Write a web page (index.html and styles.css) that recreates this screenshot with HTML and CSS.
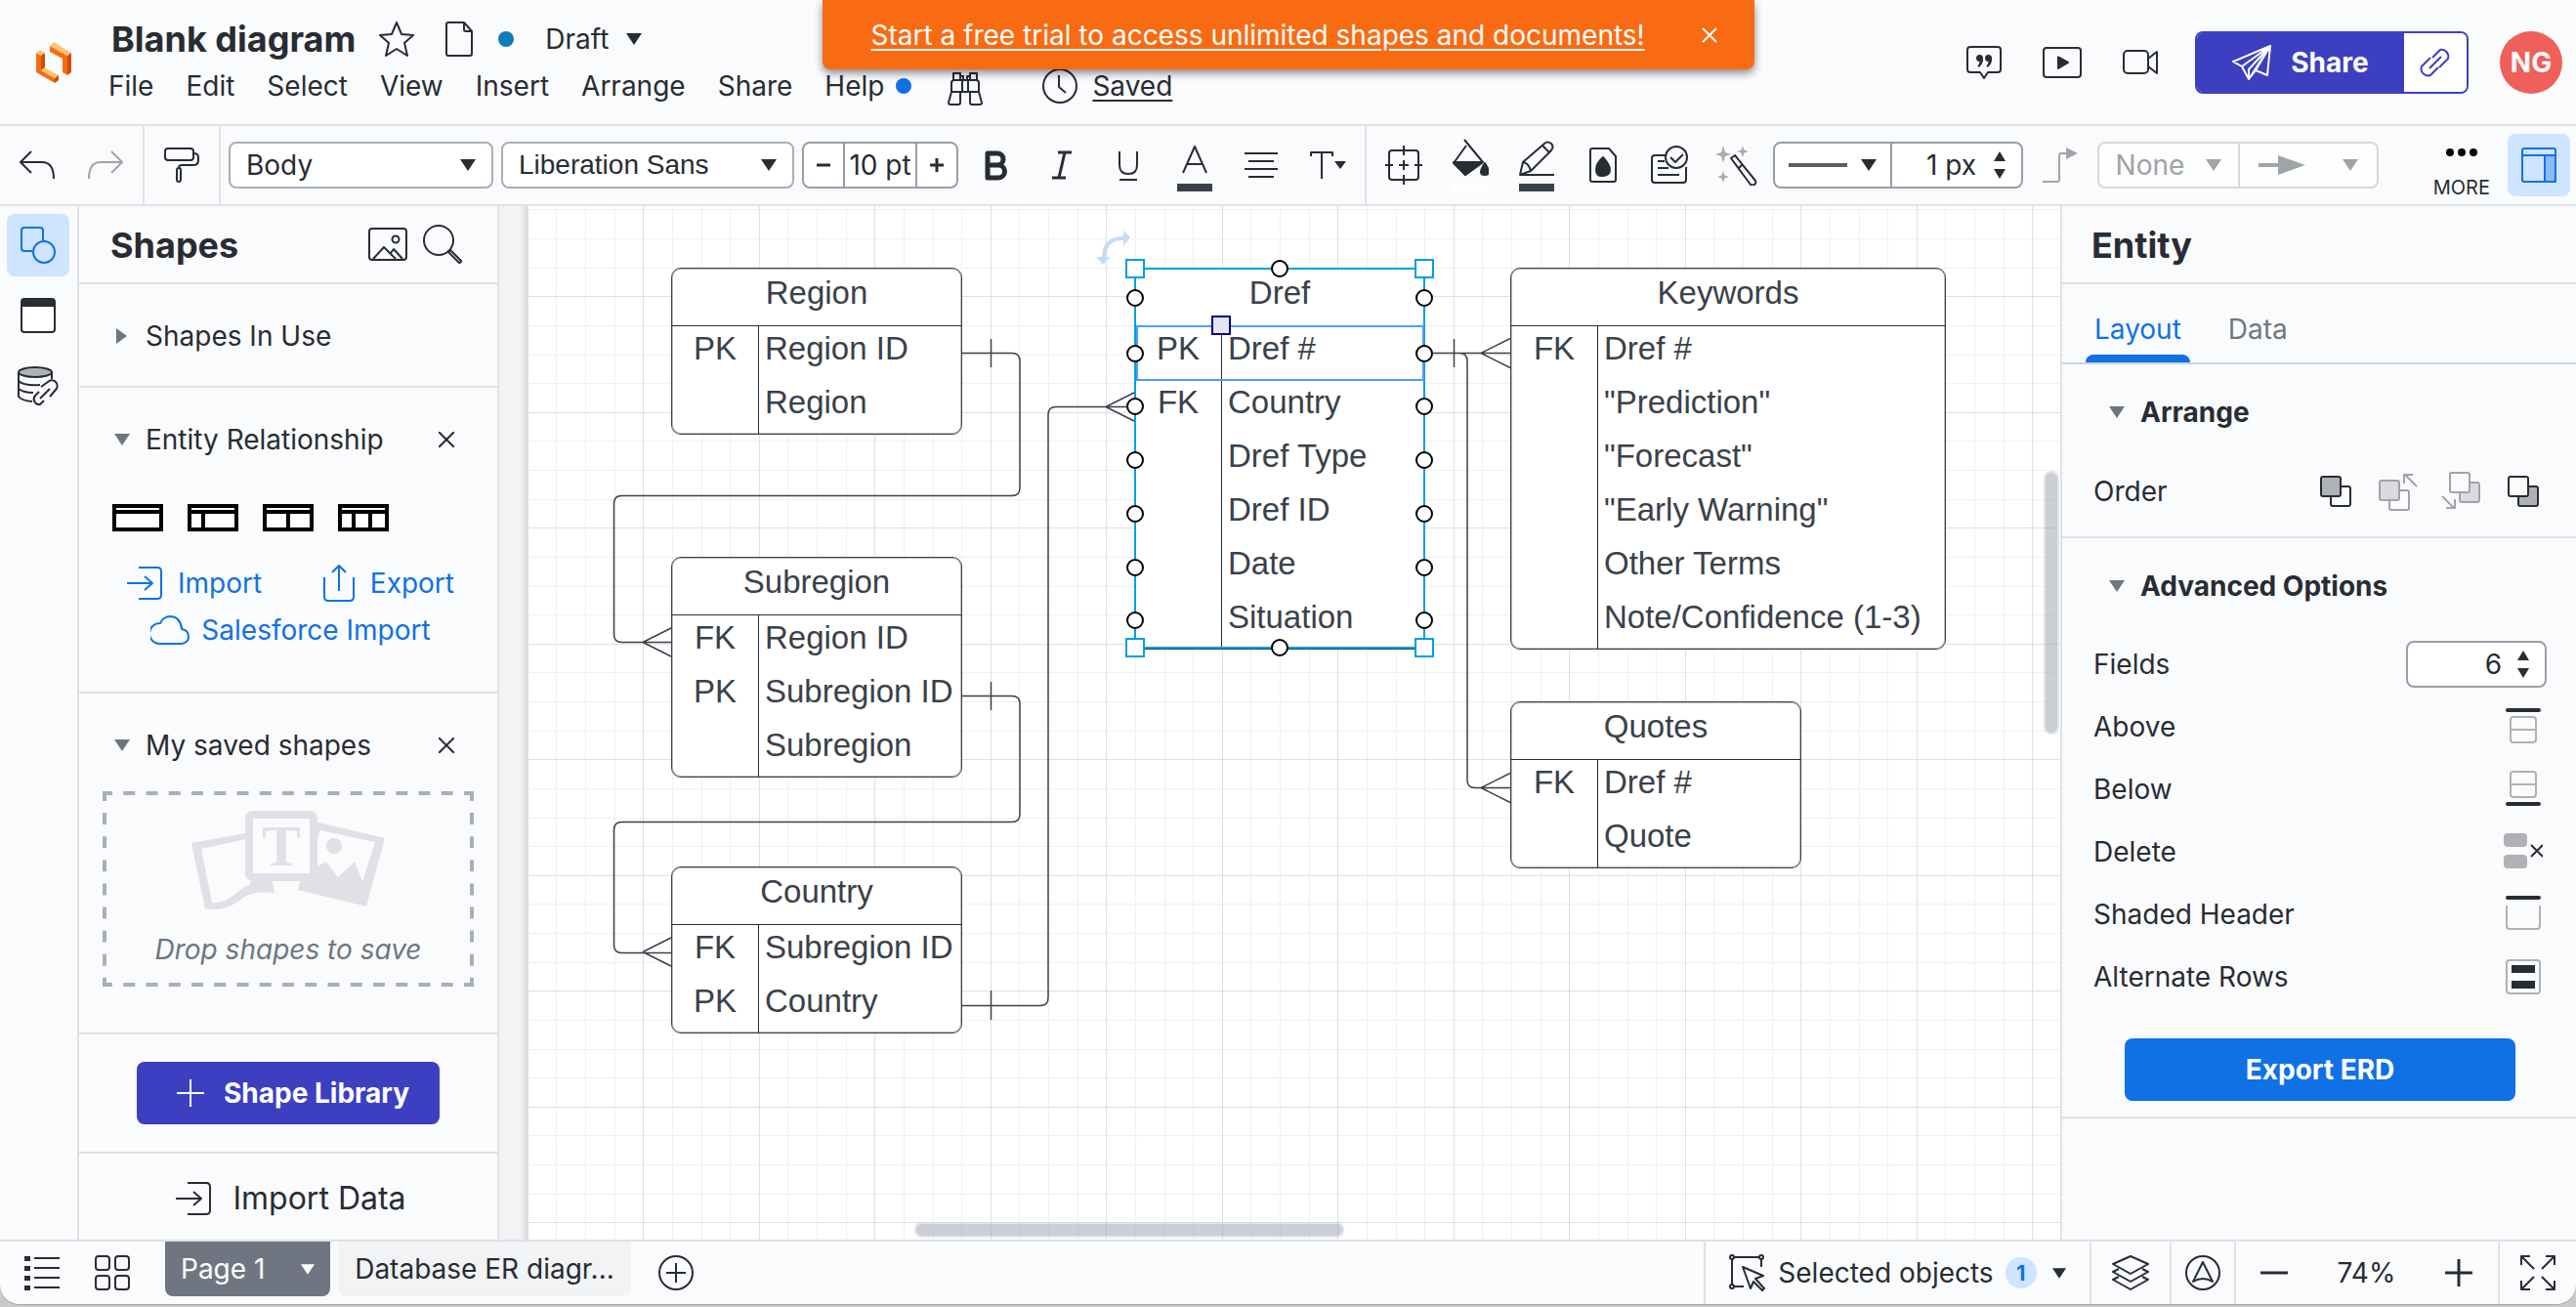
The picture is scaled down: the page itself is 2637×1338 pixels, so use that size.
FILE: index.html
```html
<!DOCTYPE html>
<html lang="en">
<head>
<meta charset="utf-8">
<title>Blank diagram</title>
<link rel="stylesheet" href="styles.css">
</head>
<body>
<div class="app">

<header class="header">
  <a class="logo" href="#" aria-label="Home">
    <svg width="36" height="42" viewBox="37 43 36 42">
      <path fill="#f96b13" d="M37 54l5 3v15l14 8v5L37 74zM51 47l18 10v20l-5-3V60l-13-7z"/>
      <path fill="#ffc572" d="M37 54l4-3 5 3-4 3zM42 72l4-3 14 8-4 3zM51 47l4-4 18 11-4 3z"/>
      <path fill="#c94f05" d="M42 57l4-3v15l-4 3zM56 80l4-3v5l-4 3zM69 57l4-3v20l-4 3z"/>
    </svg>
  </a>
  <div class="head-main">
    <div class="title-row">
      <h1 class="doc-title">Blank diagram</h1>
      <button class="plain" aria-label="Favorite"><svg class="ic" width="36" height="36" viewBox="0 0 36 36"><path d="M18 1l5 12 12 1-9 8 3 13-11-7-11 7 3-13-9-8 12-1z"/></svg></button>
      <svg class="ic doc-icon" width="28" height="36" viewBox="0 0 28 36"><path d="M3 1h16l8 9v23q0 2-2 2H3q-2 0-2-2V3q0-2 2-2zM19 1v7q0 2 2 2h6"/></svg>
      <span class="dot dot-status"></span>
      <button class="plain draft">Draft <svg class="tri" width="16" height="12" viewBox="0 0 16 12"><path d="M0 0h16L8 12z"/></svg></button>
    </div>
    <nav class="menu">
      <button class="plain">File</button><button class="plain">Edit</button><button class="plain">Select</button><button class="plain">View</button><button class="plain">Insert</button><button class="plain">Arrange</button><button class="plain">Share</button><button class="plain help">Help <span class="dot"></span></button>
      <button class="plain find" aria-label="Find"><svg class="ic" width="36" height="40" viewBox="0 0 36 40"><path d="M6 14V7h7v7M23 14V7h7v7M13 14v-4h3v4M20 14v-4h3v4M4 26V17q0-3 3-3h22q3 0 3 3v9M4 26h28M15 14v12M21 14v12M4 26L1 37q0 2 2 2h8q2 0 2-2V26M32 26l3 11q0 2-2 2h-8q-2 0-2-2V26"/></svg></button>
      <svg class="ic clock" width="36" height="36" viewBox="0 0 36 36"><circle cx="18" cy="18" r="17"/><path d="M17 7v12l7 6"/></svg>
      <a class="saved" href="#">Saved</a>
    </nav>
  </div>
  <div class="head-actions">
    <button class="plain" aria-label="Comments"><svg class="ic" width="36" height="36" viewBox="0 0 36 36"><path d="M4 2h28q3 0 3 3v20q0 3-3 3H22l-4 6-4-6H4q-3 0-3-3V5q0-3 3-3z"/><path class="fill nostroke" d="M13.500 10a3.500 3.500 0 1 0 0 7q0 2.500-2 4.500l1 1.500c3.500-2.500 5-6 4.500-9.500a3.500 3.500 0 0 0-3.500-3.500zM22.500 10a3.500 3.500 0 1 0 0 7q0 2.500-2 4.500l1 1.500c3.500-2.500 5-6 4.500-9.500a3.500 3.500 0 0 0-3.500-3.500z"/></svg></button>
    <button class="plain" aria-label="Present"><svg class="ic" width="40" height="32" viewBox="0 0 40 32"><rect x="1" y="1" width="38" height="30" rx="3"/><path class="fill" d="M16 10.500l10 5.500-10 6z"/></svg></button>
    <button class="plain" aria-label="Video"><svg class="ic" width="36" height="26" viewBox="0 0 36 26"><rect x="1" y="1" width="25" height="23" rx="4"/><path d="M26 9l9-7v22l-9-7"/></svg></button>
    <div class="share">
      <button class="share-main"><svg class="ic" width="40" height="36" viewBox="0 0 40 36"><path d="M39 1L1 17l9 5zM39 1L36 31l-12-5zM39 1L10 22l7 13 7-9zM39 1L17 35V25z"/></svg>Share</button>
      <button class="share-link" aria-label="Copy link"><svg class="ic" width="34" height="34" viewBox="0 0 34 34"><path d="M14 12l8-8a7 7 0 0 1 8 9l-9 9M20 22l-8 8a7 7 0 0 1-9-9l9-9M11 23L23 11"/></svg></button>
    </div>
    <button class="avatar">NG</button>
  </div>
</header>

<div class="banner">
  <a href="#">Start a free trial to access unlimited shapes and documents!</a>
  <button class="plain" aria-label="Close"><svg class="ic" width="16" height="16" viewBox="0 0 16 16"><path d="M1 1l14 14M15 1L1 15"/></svg></button>
</div>

<div class="toolbar">
  <div class="tb-group tb-history">
    <button class="plain" aria-label="Undo"><svg class="ic" width="36" height="30" viewBox="0 0 36 30"><path d="M12 1L1 12l11 11M1 12h22q12 0 12 17"/></svg></button>
    <button class="plain" aria-label="Redo" disabled><svg class="ic dim" width="36" height="30" viewBox="0 0 36 30"><path d="M24 1l11 11-11 11M35 12H13Q1 12 1 29"/></svg></button>
  </div>
  <div class="tb-group tb-paint">
    <button class="plain" aria-label="Format painter"><svg class="ic" width="36" height="36" viewBox="0 0 36 36"><rect x="1" y="1" width="29" height="12" rx="3"/><path d="M30 6q5 0 5 4v3q0 5-5 5H18q-3 0-3 3"/><rect x="13" y="21" width="4" height="14" rx="2"/></svg></button>
  </div>
  <div class="tb-group tb-text">
    <div class="drop drop-style"><select aria-label="Text style"><option>Body</option></select><svg class="tri" width="16" height="12" viewBox="0 0 16 12"><path d="M0 0h16L8 12z"/></svg></div>
    <div class="drop drop-font"><select aria-label="Font"><option>Liberation Sans</option></select><svg class="tri" width="16" height="12" viewBox="0 0 16 12"><path d="M0 0h16L8 12z"/></svg></div>
    <div class="size">
      <button aria-label="Smaller"><svg class="ic heavy" width="14" height="14" viewBox="0 0 14 14"><path d="M0 7h14"/></svg></button>
      <input type="text" value="10 pt" aria-label="Font size">
      <button aria-label="Larger"><svg class="ic heavy" width="14" height="14" viewBox="0 0 14 14"><path d="M0 7h14M7 0v14"/></svg></button>
    </div>
    <div class="cells">
      <button class="cell" aria-label="Bold"><svg class="ic boldest" width="28" height="36" viewBox="0 0 28 36"><path d="M6 6h10a6 6 0 0 1 0 12H6zM6 18h11a6.500 6.500 0 0 1 0 13H6z"/></svg></button>
      <button class="cell" aria-label="Italic"><svg class="ic heavy" width="28" height="36" viewBox="0 0 28 36"><path d="M10 5h14M4 31h14M17 5l-6 26"/></svg></button>
      <button class="cell" aria-label="Underline"><svg class="ic" width="28" height="36" viewBox="0 0 28 36"><path d="M5 4v14q0 9 9 9t9-9V4M5 33h18"/></svg></button>
      <button class="cell" aria-label="Text color"><svg class="ic" width="36" height="54" viewBox="0 0 36 54"><path d="M6 35L18 8l12 27M10 26h16"/><path class="swatch" d="M0 46h36v8H0z"/></svg></button>
      <button class="cell" aria-label="Align"><svg class="ic" width="34" height="28" viewBox="0 0 34 28"><path d="M0 2h34M4 10h26M0 18h34M4 26h26"/></svg></button>
      <button class="cell" aria-label="Text options"><svg class="ic" width="38" height="30" viewBox="0 0 38 30"><path d="M2 6V2h22v4M13 2v27"/><path class="fill nostroke" d="M26 11h12l-6 8z"/></svg></button>
    </div>
  </div>
  <div class="tb-group tb-shape">
    <div class="cells">
      <button class="cell" aria-label="Position"><svg class="ic" width="38" height="40" viewBox="0 0 38 40"><rect x="4" y="5" width="30" height="30" rx="3"/><path d="M19 0v10M19 30v10M0 20h8M30 20h8M14 20h10M19 15v10"/></svg></button>
      <button class="cell" aria-label="Fill"><svg class="ic" width="38" height="54" viewBox="0 0 38 54"><path d="M13 1l19 23-18 13L2 25l13-18"/><path class="fill" d="M2 24h30L14 37z"/><path class="fill" d="M34 25q4 6 4 9t-4 3-4-3 4-9z"/><path fill="#fff" stroke="none" d="M1 46h36v8H1z"/></svg></button>
      <button class="cell" aria-label="Line color"><svg class="ic" width="36" height="54" viewBox="0 0 36 54"><path d="M1 37l3-13L26 5q3-3 7 0 3 3 0 7L12 33zM24 7l7 7M4 24q6 1 8 9M1 37h35"/><path class="swatch" d="M0 46h36v8H0z"/></svg></button>
      <button class="cell" aria-label="Opacity"><svg class="ic" width="28" height="36" viewBox="0 0 28 36"><path d="M3 1h17l7 8v24q0 2-2 2H3q-2 0-2-2V3q0-2 2-2z"/><path class="fill" d="M14 10q7 8 7 13t-7 6-7-6 7-13z"/></svg></button>
      <button class="cell" aria-label="Review"><svg class="ic" width="38" height="40" viewBox="0 0 38 40"><path d="M15 10H4q-3 0-3 3v22q0 3 3 3h29q3 0 3-3V22M7 16h7M7 23h11M7 30h22"/><circle cx="26" cy="12" r="11"/><path d="M20 12l5 5 8-8"/></svg></button>
      <button class="cell" aria-label="Magic wand"><svg class="ic" width="44" height="42" viewBox="0 0 44 42"><path d="M17 14l4-3 21 26q1 3-1 4t-4 0zM25 24l4-4"/><path fill="#a9abaf" stroke="none" d="M9 1l2 7 6 2-6 2-2 7-2-7-6-2 6-2zM29 1l1.500 4.500L35 7l-4.500 1.500L29 13l-1.500-4.500L23 7l4.500-1.500zM9 27l1.500 4.500L15 33l-4.500 1.500L9 39l-1.500-4.500L3 33l4.500-1.500z"/></svg></button>
    </div>
    <div class="size stroke-box">
      <button class="line-style" aria-label="Line style"><svg width="60" height="4"><rect width="60" height="4" fill="#5c5e61"/></svg><svg class="tri" width="16" height="12" viewBox="0 0 16 12"><path d="M0 0h16L8 12z"/></svg></button>
      <input class="px" type="text" value="1 px" aria-label="Line width">
      <svg class="tri spin" width="12" height="28" viewBox="0 0 12 28"><path d="M0 10L6 0l6 10zM0 18h12L6 28z"/></svg>
    </div>
    <button class="cell" aria-label="Connector" disabled><svg class="ic dim" width="36" height="36" viewBox="0 0 36 36"><path d="M0 35h15q2 0 2-2V8q0-2 2-2h6"/><path fill="#a0a3a8" stroke="none" d="M24 0l12 6-12 6z"/></svg></button>
    <div class="size ends">
      <button class="none" disabled>None<svg class="tri" width="16" height="12" viewBox="0 0 16 12"><path d="M0 0h16L8 12z"/></svg></button>
      <button class="end" aria-label="Arrow end" disabled><svg class="tri" width="48" height="20" viewBox="0 0 48 20"><path d="M0 8h20V0l28 10-28 10v-8H0z"/></svg><svg class="tri" width="16" height="12" viewBox="0 0 16 12"><path d="M0 0h16L8 12z"/></svg></button>
    </div>
  </div>
  <div class="tb-end">
    <button class="more"><svg width="32" height="8" viewBox="0 0 32 8"><circle cx="4" cy="4" r="4"/><circle cx="16" cy="4" r="4"/><circle cx="28" cy="4" r="4"/></svg>MORE</button>
    <button class="toggle on" aria-label="Toggle panel"><svg class="ic" width="36" height="36" viewBox="0 0 36 36"><path fill="#8bbcf5" d="M24 8h11v27H24z"/><rect x="1" y="1" width="34" height="34" rx="2"/><path d="M1 8h34M24 8v27"/></svg></button>
  </div>
</div>

<div class="work">
  <aside class="rail">
    <button class="toggle on" aria-label="Shapes"><svg class="ic" width="36" height="38" viewBox="0 0 36 38"><path d="M12 25H4q-3 0-3-3V4q0-3 3-3h16q3 0 3 3v10"/><circle cx="24" cy="26" r="11"/></svg></button>
    <button class="toggle" aria-label="Containers"><svg class="ic" width="36" height="38" viewBox="0 0 36 38"><rect x="1" y="2" width="34" height="34" rx="3" fill="#fff"/><path class="fill" d="M2 3h32v6H2z"/></svg></button>
    <button class="toggle" aria-label="Data"><svg class="ic" width="42" height="42" viewBox="0 0 42 42"><path fill="#b0b2b6" d="M1 7a17 5 0 0 1 34 0 17 5 0 0 1-34 0z"/><path d="M1 7v25q3 4 14 5M35 7v7M1 16q5 5 22 4M1 24q5 4 15 4"/><path d="M24 22l7-5a5.500 5.500 0 0 1 8 8l-6 7M27 36l-4 4a5.500 5.500 0 0 1-5-9l4-4M23 34l10-10"/></svg></button>
  </aside>

  <aside class="shapes">
    <div class="panel-head shapes-head">
      <h2>Shapes</h2>
      <button class="plain" aria-label="Images"><svg class="ic" width="40" height="34" viewBox="0 0 40 34"><rect x="1" y="1" width="38" height="32" rx="3"/><circle cx="28" cy="12" r="3.500"/><path d="M5 32l11-12 9 9M23 26l3-4 9 10M22 26l6 6"/></svg></button>
      <button class="plain" aria-label="Search"><svg class="ic" width="40" height="40" viewBox="0 0 40 40"><circle cx="16" cy="16" r="15"/><path d="M26 28l2-2 11 11q0 2-2 2z"/></svg></button>
    </div>
    <section class="sec">
      <button class="sec-head"><svg class="tri grey" width="16" height="16" viewBox="0 0 16 16"><path d="M2 0l11 8-11 8z"/></svg><span>Shapes In Use</span></button>
    </section>
    <section class="sec sec-er">
      <div class="sec-head"><svg class="tri grey" width="16" height="12" viewBox="0 0 16 12"><path d="M0 0h16L8 12z"/></svg><span>Entity Relationship</span><button class="plain" aria-label="Close"><svg class="ic" width="16" height="16" viewBox="0 0 16 16"><path d="M0 0l16 16M16 0L0 16"/></svg></button></div>
      <div class="er-shapes">
        <svg width="52" height="28" viewBox="0 0 52 28"><rect x="2" y="2" width="48" height="24"/><path d="M2 8h48"/></svg>
        <svg width="52" height="28" viewBox="0 0 52 28"><rect x="2" y="2" width="48" height="24"/><path d="M2 8h48M16 8v18"/></svg>
        <svg width="52" height="28" viewBox="0 0 52 28"><rect x="2" y="2" width="48" height="24"/><path d="M2 8h48M26 8v18"/></svg>
        <svg width="52" height="28" viewBox="0 0 52 28"><rect x="2" y="2" width="48" height="24"/><path d="M2 8h48M16 8v18M33 8v18"/></svg>
      </div>
      <div class="er-links">
        <a href="#"><svg class="ic" width="36" height="34" viewBox="0 0 36 34"><path d="M12 1h19q4 0 4 4v24q0 4-4 4H12M0 17h25M18 10l8 7-8 7"/></svg>Import</a>
        <a href="#"><svg class="ic" width="32" height="38" viewBox="0 0 32 38"><path d="M1 13v20q0 4 4 4h22q4 0 4-4V13M16 27V2M9 8l7-7 7 7"/></svg>Export</a>
      </div>
      <div class="er-links er-sales">
        <a href="#"><svg class="ic" width="40" height="30" viewBox="0 0 40 30"><path d="M9 29a10.500 10.500 0 0 1 1-21q3-7 11-7 10 1 11 13 7 1 7 8 0 6-7 7z"/></svg>Salesforce Import</a>
      </div>
    </section>
    <section class="sec sec-saved">
      <div class="sec-head"><svg class="tri grey" width="16" height="12" viewBox="0 0 16 12"><path d="M0 0h16L8 12z"/></svg><span>My saved shapes</span><button class="plain" aria-label="Close"><svg class="ic" width="16" height="16" viewBox="0 0 16 16"><path d="M0 0l16 16M16 0L0 16"/></svg></button></div>
      <div class="dropzone">
        <svg class="dashes" width="100%" height="100%" viewBox="0 0 380 200" preserveAspectRatio="none"><g stroke="#a8afba" stroke-width="4" fill="none"><path stroke-dasharray="12 11.250" stroke-dashoffset="2" d="M0 2h380M0 198h380"/><path stroke-dasharray="12 12.100" stroke-dashoffset="2" d="M2 0v200M378 0v200"/></g></svg>
        <svg class="art" width="198" height="102" viewBox="197 829 198 102">
          <path fill="#e0e1e5" fill-rule="evenodd" d="M197 862l60-11v50l22-2 3 14q-24-3-36 8-16 12-35 8zM207 868l11 55q12 1 24-9 9-8 15-9V857z"/>
          <path fill="#e0e1e5" fill-rule="evenodd" d="M323 840l72 17-19 70-70-17zM328 849l-8 40 15-8 12 16 17-16 8 20 13-40z"/>
          <circle cx="343" cy="865" r="8" fill="#e0e1e5"/>
          <rect x="256" y="833" width="66" height="64" rx="4" fill="#fafbfd" stroke="#e0e1e5" stroke-width="8"/>
          <text x="289" y="885" text-anchor="middle" class="art-t">T</text>
        </svg>
        <em>Drop shapes to save</em>
      </div>
    </section>
    <section class="sec sec-lib">
      <button class="primary"><svg class="ic" width="28" height="28" viewBox="0 0 28 28"><path d="M0 14h28M14 0v28"/></svg>Shape Library</button>
    </section>
    <button class="import-data"><svg class="ic" width="36" height="34" viewBox="0 0 36 34"><path d="M12 1h19q4 0 4 4v24q0 4-4 4H12M0 17h25M18 10l8 7-8 7"/></svg>Import Data</button>
  </aside>

  <div class="gutter"></div>

  <main class="canvas">
    <svg class="layer" width="100%" height="100%">
      <defs>
        <pattern id="grid" x="118" y="92" width="237" height="237" patternUnits="userSpaceOnUse">
          <path fill="#f0f0f1" d="M30 0h1v237h-1zM60 0h1v237h-1zM89 0h1v237h-1zM148 0h1v237h-1zM178 0h1v237h-1zM208 0h1v237h-1zM0 30h237v1H0zM0 60h237v1H0zM0 89h237v1H0zM0 148h237v1H0zM0 178h237v1H0zM0 208h237v1H0z"/>
          <path fill="#dfdfe0" d="M0 0h1v237H0zM119 0h1v237h-1zM0 0h237v1H0zM0 119h237v1H0z"/>
        </pattern>
      </defs>
      <rect width="100%" height="100%" fill="url(#grid)"/>
      <g class="wires">
        <path d="M445 150.500h51q8 0 8 8v130q0 8-8 8H96.500q-8 0-8 8v134q0 8 8 8H148M118 446.500l30-15M118 446.500l30 15M474.500 136v29"/>
        <path d="M445 501.500h51q8 0 8 8v113q0 8-8 8H96.500q-8 0-8 8v118q0 8 8 8H148M118 763.500l30-15M118 763.500l30 15M474.500 487v29"/>
        <path d="M445 818.500h80q8 0 8-8v-597q0-8 8-8h81M592 205.500l30-15M592 205.500l30 15M474.500 803v30"/>
        <path d="M918 150.500h88M976 150.500l30-15M976 150.500l30 15M948.500 136v29M950 150.500h4q8 0 8 8v429q0 8 8 8h36M976 595.500l30-15M976 595.500l30 15"/>
      </g>
    </svg>

    <table class="entity e-region"><colgroup><col class="key"><col></colgroup><thead><tr><th colspan="2">Region</th></tr></thead><tbody><tr><td>PK</td><td>Region ID</td></tr><tr><td></td><td>Region</td></tr></tbody></table>
    <table class="entity e-subregion"><colgroup><col class="key"><col></colgroup><thead><tr><th colspan="2">Subregion</th></tr></thead><tbody><tr><td>FK</td><td>Region ID</td></tr><tr><td>PK</td><td>Subregion ID</td></tr><tr><td></td><td>Subregion</td></tr></tbody></table>
    <table class="entity e-country"><colgroup><col class="key"><col></colgroup><thead><tr><th colspan="2">Country</th></tr></thead><tbody><tr><td>FK</td><td>Subregion ID</td></tr><tr><td>PK</td><td>Country</td></tr></tbody></table>
    <table class="entity e-dref"><colgroup><col class="key"><col></colgroup><thead><tr><th colspan="2">Dref</th></tr></thead><tbody><tr><td>PK</td><td>Dref #</td></tr><tr><td>FK</td><td>Country</td></tr><tr><td></td><td>Dref Type</td></tr><tr><td></td><td>Dref ID</td></tr><tr><td></td><td>Date</td></tr><tr><td></td><td>Situation</td></tr></tbody></table>
    <table class="entity e-keywords"><colgroup><col class="key"><col></colgroup><thead><tr><th colspan="2">Keywords</th></tr></thead><tbody><tr><td>FK</td><td>Dref #</td></tr><tr><td></td><td>"Prediction"</td></tr><tr><td></td><td>"Forecast"</td></tr><tr><td></td><td>"Early Warning"</td></tr><tr><td></td><td>Other Terms</td></tr><tr><td></td><td>Note/Confidence (1-3)</td></tr></tbody></table>
    <table class="entity e-quotes"><colgroup><col class="key"><col></colgroup><thead><tr><th colspan="2">Quotes</th></tr></thead><tbody><tr><td>FK</td><td>Dref #</td></tr><tr><td></td><td>Quote</td></tr></tbody></table>

    <svg class="layer" width="100%" height="100%">
      <rect x="622" y="64" width="296" height="388" fill="none" stroke="#019fe2" stroke-width="2"/>
      <rect x="624" y="123" width="293" height="55" fill="none" stroke="#4f9bff" stroke-width="2"/>
      <path fill="#c5dcf7" d="M582 52h15l-8 8zM610 25l7 7-7 9z"/>
      <path fill="none" stroke="#c5dcf7" stroke-width="4" d="M590 53q0-19 18-20h3"/>
      <g fill="#fff" stroke="#019fe2" stroke-width="2"><rect x="613" y="55" width="18" height="18"/><rect x="909" y="55" width="18" height="18"/><rect x="613" y="443" width="18" height="18"/><rect x="909" y="443" width="18" height="18"/></g>
      <g fill="#fff" stroke="#000" stroke-width="2">
        <circle cx="770" cy="64" r="8"/><circle cx="770" cy="452" r="8"/>
        <circle cx="622" cy="94" r="8"/><circle cx="622" cy="151" r="8"/><circle cx="622" cy="205" r="8"/><circle cx="622" cy="260" r="8"/><circle cx="622" cy="315" r="8"/><circle cx="622" cy="370" r="8"/><circle cx="622" cy="424" r="8"/>
        <circle cx="918" cy="94" r="8"/><circle cx="918" cy="151" r="8"/><circle cx="918" cy="205" r="8"/><circle cx="918" cy="260" r="8"/><circle cx="918" cy="315" r="8"/><circle cx="918" cy="370" r="8"/><circle cx="918" cy="424" r="8"/>
      </g>
      <rect x="701" y="113" width="18" height="18" fill="#e6e5f3" stroke="#00008b" stroke-width="2"/>
    </svg>
    <div class="thumb thumb-v"></div>
    <div class="thumb thumb-h"></div>
  </main>

  <aside class="props">
    <div class="panel-head"><h2>Entity</h2></div>
    <div class="tabs"><button class="tab active">Layout</button><button class="tab">Data</button></div>
    <section class="prop-sec arrange">
      <h3><svg class="tri grey" width="16" height="12" viewBox="0 0 16 12"><path d="M0 0h16L8 12z"/></svg>Arrange</h3>
      <div class="prop order"><span>Order</span>
        <button class="plain" aria-label="Bring to front"><svg class="ic" width="40" height="40" viewBox="0 0 40 40"><rect x="15" y="15" width="20" height="20" rx="2"/><rect x="5" y="5" width="20" height="20" rx="2" fill="#b0b1b5"/></svg></button>
        <button class="plain" aria-label="Bring forward" disabled><svg class="ic dim" width="40" height="40" viewBox="0 0 40 40"><rect x="11" y="19" width="20" height="20" rx="2"/><rect x="1" y="9" width="20" height="20" rx="2" fill="#dadbdf"/><path d="M39 15L27 3M26 12V3h9"/></svg></button>
        <button class="plain" aria-label="Send backward" disabled><svg class="ic dim" width="40" height="40" viewBox="0 0 40 40"><rect x="19" y="11" width="20" height="20" rx="2" fill="#dadbdf"/><rect x="9" y="1" width="20" height="20" rx="2" fill="#fafbfd"/><path d="M1 25l12 12M14 28v9H5"/></svg></button>
        <button class="plain" aria-label="Send to back"><svg class="ic" width="40" height="40" viewBox="0 0 40 40"><rect x="15" y="15" width="20" height="20" rx="2" fill="#b0b1b5"/><rect x="5" y="5" width="20" height="20" rx="2" fill="#fafbfd"/></svg></button>
      </div>
    </section>
    <section class="prop-sec adv">
      <h3><svg class="tri grey" width="16" height="12" viewBox="0 0 16 12"><path d="M0 0h16L8 12z"/></svg>Advanced Options</h3>
      <div class="prop fields"><label for="fields">Fields</label><div class="num"><input id="fields" type="text" value="6"><svg class="tri" width="12" height="28" viewBox="0 0 12 28"><path d="M0 10L6 0l6 10zM0 18h12L6 28z"/></svg></div></div>
      <div class="prop"><span>Above</span><button class="plain" aria-label="Add above"><svg class="ic" width="40" height="40" viewBox="0 0 40 40"><path class="heavy" d="M4 3h32"/><g class="pale"><rect x="7" y="10" width="26" height="26" rx="3"/><path d="M7 23h26"/></g></svg></button></div>
      <div class="prop"><span>Below</span><button class="plain" aria-label="Add below"><svg class="ic" width="40" height="40" viewBox="0 0 40 40"><g class="pale"><rect x="7" y="2" width="26" height="26" rx="3"/><path d="M7 15h26"/></g><path class="heavy" d="M4 35h32"/></svg></button></div>
      <div class="prop"><span>Delete</span><button class="plain" aria-label="Delete field"><svg class="ic" width="40" height="40" viewBox="0 0 40 40"><g fill="#b0b1b5" stroke="none"><rect y="1" width="24" height="14" rx="4"/><rect y="23" width="24" height="14" rx="4"/></g><path d="M28 13l12 12M40 13L28 25"/></svg></button></div>
      <div class="prop"><span>Shaded Header</span><button class="plain" aria-label="Shaded header"><svg class="ic" width="40" height="40" viewBox="0 0 40 40"><path class="heavy" d="M4 3h32"/><path class="pale" d="M3 11v21q0 3 3 3h28q3 0 3-3V11"/></svg></button></div>
      <div class="prop"><span>Alternate Rows</span><button class="plain" aria-label="Alternate rows"><svg class="ic" width="40" height="40" viewBox="0 0 40 40"><rect class="pale" x="3" y="3" width="34" height="34" rx="3"/><path class="fill nostroke" d="M8 8h24v8H8zM8 24h24v8H8z"/></svg></button></div>
      <button class="export">Export ERD</button>
    </section>
  </aside>
</div>

<footer class="footer">
  <button class="plain" aria-label="List"><svg class="ic" width="36" height="36" viewBox="0 0 36 36"><path d="M10 3h26M10 13h26M10 23h26M10 33h26"/><path class="fill nostroke" d="M0 1h6v5H0zM0 11h6v5H0zM0 21h6v5H0zM0 31h6v5H0z"/></svg></button>
  <button class="plain" aria-label="Grid"><svg class="ic" width="36" height="36" viewBox="0 0 36 36"><rect x="1" y="1" width="14" height="14" rx="3"/><rect x="21" y="1" width="14" height="14" rx="3"/><rect x="1" y="21" width="14" height="14" rx="3"/><rect x="21" y="21" width="14" height="14" rx="3"/></svg></button>
  <button class="page current">Page 1<svg class="tri" width="14" height="11" viewBox="0 0 16 12"><path d="M0 0h16L8 12z"/></svg></button>
  <button class="page">Database ER diagr...</button>
  <button class="plain add" aria-label="Add page"><svg class="ic" width="36" height="36" viewBox="0 0 36 36"><circle cx="18" cy="18" r="17"/><path d="M8 18h20M18 8v20"/></svg></button>
  <div class="foot-end">
    <button class="fcell selected"><svg class="ic" width="38" height="38" viewBox="0 0 38 38"><path d="M5 3h26M3 5v26M33 5v8M5 33h10"/><circle cx="3" cy="3" r="2"/><circle cx="33" cy="3" r="2"/><circle cx="3" cy="33" r="2"/><path d="M14 13l21 9-8 3 9 10-2 2-9-9-3 7z"/></svg><span>Selected objects</span><span class="badge">1</span><svg class="tri" width="14" height="11" viewBox="0 0 16 12"><path d="M0 0h16L8 12z"/></svg></button>
    <button class="fcell layers" aria-label="Layers"><svg class="ic" width="38" height="36" viewBox="0 0 38 36"><path d="M19 1l18 8-18 10L1 9zM7 14l-6 3 18 10 18-10-6-3M7 22l-6 3 18 10 18-10-6-3"/></svg></button>
    <button class="fcell compass" aria-label="Navigate"><svg class="ic" width="36" height="36" viewBox="0 0 36 36"><circle cx="18" cy="18" r="17"/><path d="M18 7l10 20q-10-6-20 0z"/></svg></button>
    <div class="fcell zoom">
      <button class="plain" aria-label="Zoom out"><svg class="ic thick" width="28" height="28" viewBox="0 0 28 28"><path d="M0 14h28"/></svg></button>
      <span>74%</span>
      <button class="plain" aria-label="Zoom in"><svg class="ic thick" width="28" height="28" viewBox="0 0 28 28"><path d="M0 14h28M14 0v28"/></svg></button>
    </div>
    <button class="fcell full" aria-label="Full screen"><svg class="ic" width="36" height="36" viewBox="0 0 36 36"><path d="M1 10V1h9M1 1l13 13M26 1h9v9M35 1L22 14M1 26v9h9M1 35l13-13M35 26v9h-9M35 35L22 22"/></svg></button>
  </div>
</footer>
</div>
</body>
</html>
```
FILE: styles.css
```css
* { box-sizing: border-box; }

body {
  margin: 0;
  height: 100vh;
  display: flex;
  flex-direction: column;
  padding-bottom: 3px;
  background: #cacaca;
  color: #282c33;
  font: 28px/32px Inter, "Liberation Sans", sans-serif;
}

button, input, select { font: inherit; color: inherit; margin: 0; }
button { background: none; border: 0; padding: 0; display: flex; align-items: center; justify-content: center; }
h1, h2, h3 { margin: 0; font-weight: 700; }
svg { flex: none; display: block; }
a { color: inherit; }

.app {
  flex: 1;
  min-height: 0;
  display: flex;
  flex-direction: column;
  position: relative;
  background: #fafbfd;
  border-radius: 0 0 20px 20px;
  box-shadow: 0 1px 0 #a6a6a6;
  overflow: hidden;
}

/* Icons */
.ic { fill: none; stroke: currentColor; stroke-width: 2; stroke-linejoin: round; stroke-linecap: butt; }
.ic .fill { fill: currentColor; }
.ic .nostroke { stroke: none; }
.ic .heavy { stroke-width: 4; stroke-linecap: round; }
.ic .pale { stroke: #b0b1b5; }
.ic .swatch { fill: #3a414a; stroke: none; }
.heavy, .thick { stroke-width: 3; }
.boldest { stroke-width: 5; }
.dim { color: #a0a3a8; }
.tri { fill: currentColor; }
.grey { color: #6f7681; }

/* Header */
.header { flex: none; height: 129px; display: flex; border-bottom: 2px solid #dfe3e8; }
.logo { width: 112px; padding: 43px 0 0 37px; }
.head-main { padding-top: 16px; }
.title-row, .menu { display: flex; align-items: center; height: 48px; }
.doc-title { font-size: 36px; line-height: 48px; margin: 0 24px 0 2px; }
.doc-icon { margin: 0 26px 0 32px; }
.dot { width: 16px; height: 16px; border-radius: 50%; background: #1071e5; }
.dot-status { background: #0c7cba; margin-right: 32px; }
.draft { gap: 18px; }
.menu { gap: 33px; margin-left: -1px; }
.help { gap: 12px; }
.find { margin-left: 4px; }
.clock { margin-left: 28px; }
.saved { margin-left: -18px; text-underline-offset: 4px; }
.head-actions { margin-left: auto; display: flex; align-items: center; padding-right: 14px; }
.head-actions .plain { margin-right: 42px; }
.head-actions .plain:nth-child(3) { margin-right: 38px; }
.share { display: flex; width: 280px; height: 64px; margin-right: 32px; border: 2px solid #3d3fc1; border-radius: 8px; overflow: hidden; }
.share-main { flex: 1; gap: 20px; background: #3d3fc1; color: #fff; font-weight: 700; }
.share-link { width: 64px; background: #fff; color: #3d3fc1; }
.avatar { width: 64px; height: 64px; border-radius: 50%; background: #ee6059; color: #fff; font-weight: 700; }

.banner {
  position: absolute;
  top: 0;
  left: 50%;
  transform: translateX(-50%);
  width: 954px;
  height: 71px;
  padding: 0 38px 0 50px;
  display: flex;
  align-items: center;
  justify-content: space-between;
  background: #f96b13;
  color: #fff;
  border-radius: 0 0 8px 8px;
  box-shadow: 0 4px 8px rgba(0, 0, 0, .45);
  white-space: nowrap;
}
.banner a { text-underline-offset: 4px; }

/* Toolbar */
.toolbar { flex: none; height: 82px; display: flex; border-bottom: 2px solid #dfe3e8; }
.tb-group { display: flex; align-items: center; }
.tb-history, .tb-paint, .tb-text { border-right: 2px solid #dfe3e8; }
.tb-history { padding: 0 20px; gap: 34px; }
.tb-paint { padding: 0 20px; }
.tb-text { padding: 0 4px 0 8px; gap: 8px; }
.cells { display: flex; height: 100%; }
.tb-text .cells { margin-left: -4px; }
.cell { width: 68px; height: 80px; }
.tb-shape { padding-left: 4px; gap: 4px; }
.drop { display: grid; align-items: center; height: 48px; }
.drop select, .drop .tri { grid-area: 1 / 1; }
.drop select { appearance: none; width: 100%; height: 48px; padding: 0 16px; background: #fff; border: 2px solid #a8afba; border-radius: 8px; }
.drop .tri { justify-self: end; margin-right: 18px; pointer-events: none; }
.drop-style { width: 271px; }
.drop-font { width: 300px; }
.drop-font select { font-family: "Liberation Sans", sans-serif; }
.size { display: flex; width: 160px; height: 48px; background: #fff; border: 2px solid #979ea8; border-radius: 8px; overflow: hidden; }
.size button { width: 40px; }
.size input { flex: 1; min-width: 0; padding: 0; border: 0; background: none; text-align: center; }
.size > input { border: solid #979ea8; border-width: 0 2px; }
.stroke-box { width: 256px; align-items: center; }
.size .line-style { width: 118px; height: 44px; gap: 14px; }
.stroke-box > input { align-self: stretch; border-right: 0; text-align: right; padding-right: 18px; }
.spin { margin-right: 16px; }
.ends { width: 288px; border-color: #d6d8dc; color: #a0a3a8; background: #fdfefe; }
.size .none { width: 142px; gap: 22px; }
.size .end { flex: 1; gap: 38px; border-left: 2px solid #d6d8dc; }
.tb-end { margin-left: auto; display: flex; align-items: center; gap: 18px; padding-right: 6px; }
.more { flex-direction: column; gap: 20px; font-size: 20px; line-height: 24px; padding-top: 18px; }
.toggle { width: 64px; height: 64px; border-radius: 8px; }
.on { background: #cfe4ff; color: #1071e5; }

/* Work area */
.work { flex: 1; min-height: 0; display: flex; }
.rail { flex: none; width: 81px; padding: 8px 8px 0 7px; border-right: 2px solid #dfe1e6; display: flex; flex-direction: column; gap: 8px; }
.shapes { flex: none; width: 430px; border-right: 2px solid #dfe1e6; display: flex; flex-direction: column; }
.panel-head { flex: none; height: 80px; display: flex; align-items: center; padding: 0 32px; border-bottom: 2px solid #dfe1e6; }
.panel-head h2 { font-size: 36px; line-height: 48px; flex: 1; padding-top: 2px; }
.shapes-head { gap: 16px; padding: 0 36px 0 32px; }
.sec { flex: none; border-bottom: 2px solid #dfe1e6; }
.sec-head { width: 100%; height: 104px; padding: 2px 44px 0 36px; display: flex; align-items: center; gap: 16px; justify-content: flex-start; }
.sec-head span { flex: 1; text-align: left; }
.sec-er { padding-bottom: 39px; }
.er-shapes { display: flex; gap: 25px; padding: 15px 34px 29px; }
.er-shapes svg { fill: #fff; stroke: #000; stroke-width: 4; }
.er-links { display: flex; height: 48px; justify-content: space-between; padding: 0 44px 0 49px; color: #1071e5; }
.er-links a { display: flex; align-items: center; gap: 16px; text-decoration: none; }
.er-sales { justify-content: center; }
.er-sales a { gap: 12px; }
.sec-saved { flex: 1; min-height: 300px; }
.dropzone { height: 200px; margin: -4px 24px 0; display: flex; flex-direction: column; align-items: center; gap: 24px; padding-top: 20px; position: relative; color: #6f7681; }
.dashes { position: absolute; inset: 0; }
.art-t { font: 700 60px "Liberation Serif", serif; fill: #e0e1e5; }
.sec-lib { height: 122px; display: flex; align-items: center; justify-content: center; }
.primary { width: 310px; height: 64px; gap: 20px; padding-left: 10px; border-radius: 8px; background: #3d3fc1; color: #fff; font-weight: 700; }
.import-data { flex: none; height: 88px; width: 100%; gap: 22px; padding: 4px 0 0 6px; font-size: 32px; }
.gutter { flex: none; width: 29px; background: linear-gradient(to right, #f2f3f5 22px, #d8d9dc); }

/* Canvas */
.canvas { flex: 1; min-width: 0; position: relative; overflow: hidden; background: #fff; }
.layer { position: absolute; inset: 0; }
.wires { fill: none; stroke: #3a414a; stroke-width: 1.5px; }
.entity { position: absolute; width: 298px; table-layout: fixed; border-spacing: 0; border: 1px solid #3a414a; border-radius: 10px; box-shadow: inset 0 0 0 1px #b9bcc0; background: #fff; color: #3a414a; font: 33px/38px "Liberation Sans", sans-serif; }
.entity .key { width: 89px; }
.entity th { height: 59px; padding: 0 0 8px; font-weight: 400; border-bottom: 1px solid #282c33; }
.entity td { height: 55px; padding: 0 0 10px 6px; white-space: nowrap; }
.entity td:first-child { padding-left: 0; text-align: center; border-right: 1px solid #282c33; }
.e-region { left: 147px; top: 63px; }
.e-subregion { left: 147px; top: 359px; }
.e-country { left: 147px; top: 676px; }
.e-dref { left: 621px; top: 63px; }
.e-keywords { left: 1006px; top: 63px; width: 446px; }
.e-quotes { left: 1006px; top: 507px; }
.thumb { position: absolute; background: #a8afba; opacity: .6; border: 2px solid #d0d4da; border-radius: 8px; }
.thumb-v { right: 1px; top: 271px; width: 16px; height: 270px; }
.thumb-h { left: 396px; bottom: 2px; width: 440px; height: 16px; }

/* Properties */
.props { flex: none; width: 528px; border-left: 2px solid #dfe1e6; }
.props .panel-head { padding: 0 30px; }
.tabs { display: flex; height: 82px; padding: 0 24px; gap: 30px; border-bottom: 2px solid #cdd3da; }
.tab { padding: 20px 9px 0; border-bottom: 8px solid transparent; color: #6f7681; }
.tab.active { color: #1071e5; position: relative; }
.tab.active::after { content: ""; position: absolute; left: 0; right: 0; bottom: -8px; height: 8px; border-radius: 8px 8px 0 0; background: #1071e5; }
.prop-sec { padding: 16px 30px 16px 32px; border-bottom: 2px solid #dfe1e6; }
.arrange { padding-bottom: 6px; }
h3 { display: flex; align-items: center; gap: 16px; height: 66px; padding-left: 16px; font-size: 28px; line-height: 32px; }
.prop { display: flex; align-items: center; justify-content: space-between; height: 64px; padding-right: 4px; }
.order { height: 80px; margin-top: 8px; gap: 24px; }
.order span { flex: 1; }
.fields { margin-top: 15px; padding-right: 0; }
.num { display: flex; align-items: center; width: 144px; height: 48px; padding-right: 16px; gap: 16px; background: #fff; border: 2px solid #979ea8; border-radius: 8px; }
.num input { flex: 1; min-width: 0; padding: 0; border: 0; background: none; text-align: right; }
.export { width: 400px; height: 64px; margin: 31px 0 0 32px; border-radius: 8px; background: #1071e5; color: #fff; font-weight: 700; }

/* Footer */
.footer { flex: none; height: 66px; display: flex; align-items: center; border-top: 2px solid #dfe1e6; padding-left: 25px; }
.footer > .plain + .plain { margin-left: 36px; }
.page { align-self: flex-start; height: 56px; padding: 0 16px; border-radius: 0 0 8px 8px; white-space: nowrap; }
.page.current { width: 169px; margin: 0 8px 0 36px; justify-content: space-between; background: #6f7681; color: #fff; }
.page:not(.current) { width: 300px; background: #f2f3f5; }
.footer .add { margin-left: 28px; }
.foot-end { margin-left: auto; align-self: stretch; display: flex; }
.fcell { display: flex; align-items: center; justify-content: center; border-left: 2px solid #dfe1e6; }
.selected { width: 395px; gap: 12px; }
.badge { width: 32px; height: 32px; margin-right: 4px; border-radius: 50%; background: #cfe4ff; color: #1071e5; font-size: 22px; font-weight: 700; }
.layers { width: 82px; }
.compass { width: 66px; }
.zoom { width: 270px; justify-content: space-between; padding: 0 26px 0 25px; }
.full { width: 80px; }
```
